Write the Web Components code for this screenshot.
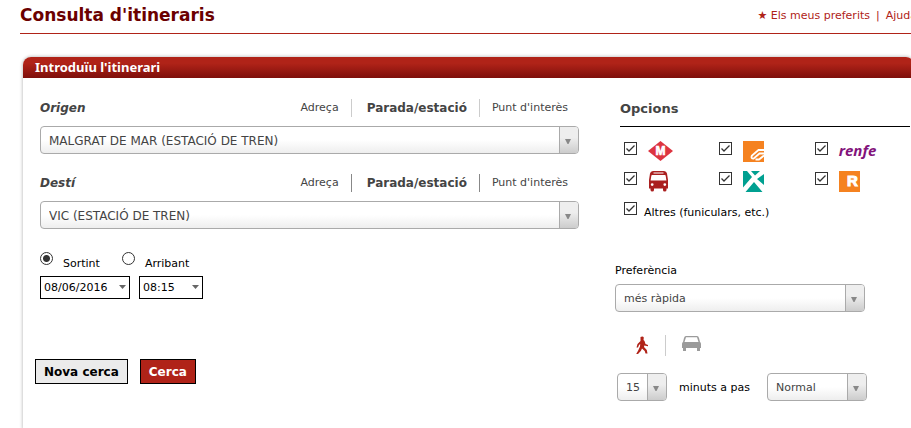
<!DOCTYPE html>
<html lang="ca">
<head>
<meta charset="utf-8">
<title>Consulta d'itineraris</title>
<style>
  html {
    scrollbar-width: none;
  }

  body {
    margin: 0;
    overflow-x: hidden;
    background: #fff;
    color: #000;
    font: 11px/16px Verdana, "DejaVu Sans", sans-serif;
  }
</style>
</head>
<body>
<trip-planner></trip-planner>

<script>
class TripSelect extends HTMLElement {
  constructor() {
    super();
    this.attachShadow({ mode: "open" });
  }

  static get styles() {
    return /* css */`
      :host {
        display: flex;
      }

      .box {
        flex: 1;
        display: flex;
        position: relative;
        box-sizing: border-box;
        height: 28px;
        border: 1px solid #aaa;
        border-radius: 4px;
        overflow: hidden;
        background: linear-gradient(#fff 50%, #eee);
      }

      select {
        appearance: none;
        flex: 1;
        min-width: 0;
        border: 0;
        margin: 0;
        padding: 2px 20px 0 8px;
        background: none;
        color: #444;
        font: inherit;
      }

      .arrow {
        position: absolute;
        top: 0;
        right: 0;
        bottom: 0;
        box-sizing: border-box;
        width: 19px;
        padding: 2px 2px 0 0;
        display: grid;
        place-items: center;
        border-left: 1px solid #aaa;
        background: linear-gradient(#eee 40%, #ccc);
        pointer-events: none;
      }
    `;
  }

  connectedCallback() {
    this.render();
  }

  render() {
    const options = this.getAttribute("options").split("|");
    this.shadowRoot.innerHTML = /* html */`
    <style>${TripSelect.styles}</style>
    <div class="box">
      <select aria-label="${this.getAttribute("label")}">
        ${options.map(option => `<option>${option}</option>`).join("")}
      </select>
      <span class="arrow">
        <svg width="6" height="5" viewBox="0 0 6 5"><path d="M0 0h6L3.5 5h-1z" fill="#888"/></svg>
      </span>
    </div>`;
  }
}

customElements.define("trip-select", TripSelect);

class TripPlace extends HTMLElement {
  constructor() {
    super();
    this.attachShadow({ mode: "open" });
  }

  static get styles() {
    return /* css */`
      :host {
        display: block;
      }

      .top {
        display: flex;
        justify-content: space-between;
        align-items: center;
        height: 18px;
        margin-bottom: 9px;
        color: #444;
      }

      h3 {
        margin: 0;
        font-size: 12px;
        font-style: italic;
      }

      nav {
        display: flex;
        padding-right: 11px;
      }

      a {
        padding: 0 12px 0 15px;
        border-right: 1px solid var(--divider, #ccc);
        line-height: 18px;
        color: inherit;
        text-decoration: none;
      }

      a:last-child {
        border: 0;
        padding: 0 0 0 12px;
      }

      .current {
        font-size: 12px;
        font-weight: bold;
      }

      trip-select {
        font-size: 12px;
      }
    `;
  }

  connectedCallback() {
    this.render();
  }

  render() {
    const label = this.getAttribute("label");
    this.shadowRoot.innerHTML = /* html */`
    <style>${TripPlace.styles}</style>
    <div class="top">
      <h3>${label}</h3>
      <nav>
        <a href="#">Adreça</a>
        <a href="#" class="current">Parada/estació</a>
        <a href="#">Punt d'interès</a>
      </nav>
    </div>
    <trip-select label="${label}" options="${this.getAttribute("value")}"></trip-select>`;
  }
}

customElements.define("trip-place", TripPlace);

class TripSchedule extends HTMLElement {
  constructor() {
    super();
    this.attachShadow({ mode: "open" });
  }

  static get styles() {
    return /* css */`
      :host {
        display: block;
      }

      .modes {
        display: flex;
        gap: 22px;
        height: 24px;
      }

      label {
        display: flex;
        gap: 10px;
        line-height: 24px;
      }

      input {
        appearance: none;
        box-sizing: border-box;
        width: 13px;
        height: 13px;
        margin: 0;
        border: 1px solid #333;
        border-radius: 50%;
      }

      input:checked {
        background: radial-gradient(circle, #333 3px, #fff 4px);
      }

      .when {
        display: flex;
        gap: 9px;
      }

      .field {
        position: relative;
        display: flex;
      }

      select {
        appearance: none;
        box-sizing: border-box;
        height: 23px;
        border: 1px solid #000;
        border-radius: 0;
        padding: 1px 19px 0 3px;
        background: #fff;
        color: #000;
        font: inherit;
      }

      .date {
        width: 90px;
      }

      .time {
        width: 64px;
      }

      svg {
        position: absolute;
        top: 9px;
        right: 4px;
        pointer-events: none;
      }
    `;
  }

  connectedCallback() {
    this.render();
  }

  render() {
    const arrow = `<svg width="7" height="4" viewBox="0 0 7 4"><path d="M0 0h7L3.5 4z" fill="#666"/></svg>`;
    this.shadowRoot.innerHTML = /* html */`
    <style>${TripSchedule.styles}</style>
    <div class="modes">
      <label><input type="radio" name="mode" checked>Sortint</label>
      <label><input type="radio" name="mode">Arribant</label>
    </div>
    <div class="when">
      <span class="field"><select class="date" aria-label="Data"><option>08/06/2016</option></select>${arrow}</span>
      <span class="field"><select class="time" aria-label="Hora"><option>08:15</option></select>${arrow}</span>
    </div>`;
  }
}

customElements.define("trip-schedule", TripSchedule);

class TripCheck extends HTMLElement {
  constructor() {
    super();
    this.attachShadow({ mode: "open" });
  }

  static get styles() {
    return /* css */`
      :host {
        display: block;
        height: 21px;
      }

      label {
        display: flex;
        gap: var(--check-gap, 11px);
      }

      input {
        appearance: none;
        flex: none;
        box-sizing: border-box;
        width: 13px;
        height: 13px;
        margin: 1px 0 0;
        border: 1px solid #333;
        background: #fff;
      }

      input:checked {
        background: url("data:image/svg+xml,%3Csvg xmlns='http://www.w3.org/2000/svg' viewBox='0 0 11 11'%3E%3Cpath d='M1.5 5.5l2.5 2.5 5.5-5.5' fill='none' stroke='%23333' stroke-width='1.3'/%3E%3C/svg%3E");
      }
    `;
  }

  connectedCallback() {
    this.render();
  }

  render() {
    this.shadowRoot.innerHTML = /* html */`
    <style>${TripCheck.styles}</style>
    <label><input type="checkbox" aria-label="${this.getAttribute("label")}" checked><slot></slot></label>`;
  }
}

customElements.define("trip-check", TripCheck);

class TripOptions extends HTMLElement {
  constructor() {
    super();
    this.attachShadow({ mode: "open" });
  }

  static get styles() {
    return /* css */`
      :host {
        display: block;
      }

      h3 {
        margin: 0 0 14px;
        padding: 1px 0 8px;
        border-bottom: 1px solid #000;
        line-height: 18px;
        font-size: 13px;
        color: #444;
      }

      .grid {
        display: grid;
        grid-template-columns: repeat(3, 1fr);
        gap: 9px 0;
        padding-left: 4px;
      }

      .grid svg {
        display: block;
        overflow: hidden;
      }

      .wide {
        grid-column: 1 / -1;
        --check-gap: 7px;
        line-height: 24px;
      }

      .renfe {
        font: italic bold 15px/18px "Open Sans", sans-serif;
        color: #82127b;
      }

      .preference {
        margin: 40px 0 0 -5px;
        width: 250px;
      }

      .preference span {
        display: block;
        padding-top: 1px;
      }

      .preference trip-select {
        margin-top: 5px;
      }

      .transport {
        display: flex;
        margin: 23px 0 17px 15px;
      }

      button {
        display: flex;
        align-items: flex-start;
        height: 21px;
        border: 0;
        margin: 0;
        padding: 1px 16px 0 0;
        background: none;
      }

      button + button {
        border-left: 1px solid #ccc;
        padding: 1px 0 0 16px;
      }

      .walk {
        display: flex;
        align-items: center;
        margin-left: -3px;
      }

      .walk span {
        padding-top: 1px;
      }

      .minutes {
        width: 50px;
        margin-right: 12px;
      }

      .pace {
        width: 100px;
        margin-left: 17px;
      }
    `;
  }

  connectedCallback() {
    this.render();
  }

  render() {
    this.shadowRoot.innerHTML = /* html */`
    <style>${TripOptions.styles}</style>
    <h3>Opcions</h3>
    <div class="grid">
      <trip-check label="Metro">
        <svg width="25" height="20" viewBox="0 0 25 20">
          <path d="M12.5 0L25 10 12.5 20 0 10z" fill="#dd3440"/>
          <text x="12.5" y="14" text-anchor="middle" font-family="Liberation Sans" font-weight="bold" font-size="12" fill="#fff" stroke="#fff" stroke-width=".7">M</text>
        </svg>
      </trip-check>
      <trip-check label="FGC">
        <svg width="21" height="21" viewBox="0 0 21 21">
          <path d="M0 0h21v21H0z" fill="#f58220"/>
          <path d="M21 9h-5.500L9 14.500q-1.500 3 1.500 3.200L16.500 12.500H21M12.500 18.500h3.500l5-4" fill="none" stroke="#fff" stroke-width="1.800"/>
        </svg>
      </trip-check>
      <trip-check label="Renfe"><span class="renfe">renfe</span></trip-check>
      <trip-check label="Autobús">
        <svg width="21" height="21" viewBox="0 0 21 21">
          <path fill="#aa1f1f" fill-rule="evenodd" d="M5 0h11q2.500 0 3 2.500L20 9v8.500h-1.500V19q0 1.500-1.800 1.500T15 19v-1.500H6V19q0 1.500-1.700 1.500T2.500 19v-1.500H1V9l1-6.500Q2.500 0 5 0zM5.500 1.600v.9h10v-.9zM4 4Q3.500 4 3.300 5L2.600 9.500h15.800L17.700 5Q17.500 4 17 4zM4.200 12.200a1.400 1.400 0 100 2.800 1.400 1.400 0 000-2.800zm12.600 0a1.400 1.400 0 100 2.800 1.400 1.400 0 000-2.800z"/>
        </svg>
      </trip-check>
      <trip-check label="Tram">
        <svg width="21" height="21" viewBox="0 0 21 21">
          <path d="M0 0h4l5 6L0 16.500zM8 0h9l-5 4.500zM21 3v11l-7-6zM2.500 21L11 11l8.500 10z" fill="#00a091"/>
        </svg>
      </trip-check>
      <trip-check label="Rodalies">
        <svg width="21" height="21" viewBox="0 0 21 21">
          <path d="M0 0h21v21H0z" fill="#f58220"/>
          <text x="8" y="15" font-family="Liberation Sans" font-weight="bold" font-size="15" fill="#fff" stroke="#fff">R</text>
        </svg>
      </trip-check>
      <trip-check class="wide" label="Altres">Altres (funiculars, etc.)</trip-check>
    </div>
    <div class="preference">
      <span>Preferència</span>
      <trip-select label="Preferència" options="més ràpida"></trip-select>
    </div>
    <div class="transport">
      <button type="button" aria-label="A peu">
        <svg width="14" height="19" viewBox="0 0 14 19">
          <path d="M5.500 1Q8 0 8.800 1.500L8.500 4 9.500 5l1 3 2.500 1v1.300L9.300 9.500 9 11l2.800 3 .7 3.500h-2L9.700 15 7 12.500 5.800 15 3 18H1.200l2-3.500L5 10.500 5.200 8 4 9 3 11.500H1.500L2.500 8 5.500 5z" fill="#b02318"/>
        </svg>
      </button>
      <button type="button" aria-label="En cotxe">
        <svg width="19" height="16" viewBox="0 0 19 16">
          <path fill="#9b9b9b" fill-rule="evenodd" d="M4 0h11q1.500 0 2 2l1 4q1 .5 1 2v4h-1v3h-3v-3H4v3H1v-3H0V8q0-1.500 1-2l1-4q.5-2 2-2zM4 1.200L2.500 6h14L15 1.200z"/>
        </svg>
      </button>
    </div>
    <div class="walk">
      <trip-select class="minutes" label="Minuts" options="15"></trip-select>
      <span>minuts a pas</span>
      <trip-select class="pace" label="Pas" options="Normal"></trip-select>
    </div>`;
  }
}

customElements.define("trip-options", TripOptions);

class TripPanel extends HTMLElement {
  constructor() {
    super();
    this.attachShadow({ mode: "open" });
  }

  static get styles() {
    return /* css */`
      :host {
        display: block;
        border-radius: 8px 8px 0 0;
        background: #fff;
        box-shadow: 0 0 3px 1px #ccc;
      }

      h2 {
        margin: 0;
        padding-left: 12px;
        border-radius: 8px 8px 0 0;
        background: linear-gradient(#b02318 30%, #7e0f0b);
        color: #fff;
        font: bold 13px/21px Verdana, "Noto Sans", sans-serif;
      }
    `;
  }

  connectedCallback() {
    this.render();
  }

  render() {
    this.shadowRoot.innerHTML = /* html */`
    <style>${TripPanel.styles}</style>
    <h2>${this.getAttribute("heading")}</h2>
    <slot></slot>`;
  }
}

customElements.define("trip-panel", TripPanel);

class TripPlanner extends HTMLElement {
  constructor() {
    super();
    this.attachShadow({ mode: "open" });
  }

  static get styles() {
    return /* css */`
      :host {
        display: flex;
        flex-direction: column;
        box-sizing: border-box;
        min-width: 937px;
        min-height: 100vh;
        padding: 0 20px;
      }

      header {
        display: flex;
        justify-content: space-between;
        align-items: flex-start;
        height: 33px;
        border-bottom: 1px solid #b02318;
        margin-bottom: 23px;
        line-height: 31px;
        color: #b02318;
      }

      h1 {
        margin: 0;
        font-size: 17px;
        color: #6b0000;
      }

      header nav {
        display: flex;
        gap: 6px;
      }

      header a {
        color: inherit;
        text-decoration: none;
      }

      trip-panel {
        flex: 1;
        margin: 0 3px;
      }

      form {
        display: grid;
        grid-template-columns: 539px 290px;
        column-gap: 41px;
        padding: 21px 17px 27px;
      }

      .places {
        display: grid;
        gap: 20px;
        margin-bottom: 23px;
      }

      .dark {
        --divider: #888;
      }

      .buttons {
        display: flex;
        gap: 12px;
        margin: 60px 0 0 -5px;
      }

      button {
        height: 25px;
        padding: 0 8px;
        border: 1px solid #000;
        background: #ebebeb;
        color: #000;
        font: bold 12px/16px Verdana, "DejaVu Sans", sans-serif;
      }

      .primary {
        background: #b02318;
        color: #fff;
      }
    `;
  }

  connectedCallback() {
    this.render();
  }

  render() {
    this.shadowRoot.innerHTML = /* html */`
    <style>${TripPlanner.styles}</style>
    <header>
      <h1>Consulta d'itineraris</h1>
      <nav><a href="#">★ Els meus preferits</a><span>|</span><a href="#">Ajuda</a></nav>
    </header>
    <trip-panel heading="Introduïu l'itinerari">
      <form>
        <div>
          <div class="places">
            <trip-place label="Origen" value="MALGRAT DE MAR (ESTACIÓ DE TREN)"></trip-place>
            <trip-place class="dark" label="Destí" value="VIC (ESTACIÓ DE TREN)"></trip-place>
          </div>
          <trip-schedule></trip-schedule>
          <div class="buttons">
            <button type="reset">Nova cerca</button>
            <button type="button" class="primary">Cerca</button>
          </div>
        </div>
        <trip-options></trip-options>
      </form>
    </trip-panel>`;
  }
}

customElements.define("trip-planner", TripPlanner);
</script>
</body>
</html>
